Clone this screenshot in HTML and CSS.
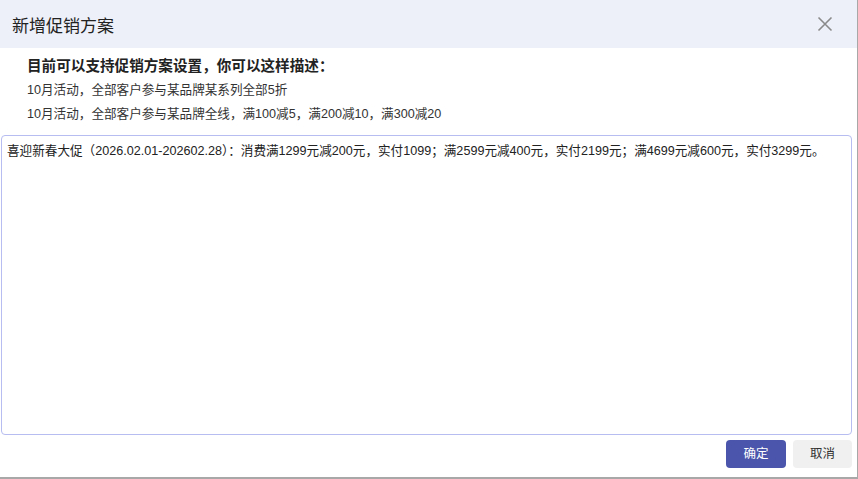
FILE: index.html
```html
<!DOCTYPE html>
<html lang="zh-CN">
<head>
    <meta charset="UTF-8">
    <title>新增促销方案</title>
    <link rel="stylesheet" href="styles.css">
</head>
<body>
    <div class="dialog">
        <div class="header">
            <div class="title">新增促销方案</div>
            <div class="close">
                <svg width="16" height="16" viewBox="0 0 16 16">
                    <path d="M1.5 1.5 L14.5 14.5 M14.5 1.5 L1.5 14.5" stroke="#8a8a8a" stroke-width="1.6" fill="none"/>
                </svg>
            </div>
        </div>
        <div class="body">
            <div class="tips">
                <div class="tip-title">目前可以支持促销方案设置，你可以这样描述：</div>
                <div class="tip-line">10月活动，全部客户参与某品牌某系列全部5折</div>
                <div class="tip-line">10月活动，全部客户参与某品牌全线，满100减5，满200减10，满300减20</div>
            </div>
            <textarea class="content">喜迎新春大促（2026.02.01-202602.28）：消费满1299元减200元，实付1099；满2599元减400元，实付2199元；满4699元减600元，实付3299元。</textarea>
            <div class="footer">
                <div class="btn primary">确定</div>
                <div class="btn">取消</div>
            </div>
        </div>
    </div>
</body>
</html>
```

FILE: styles.css
```css
html, body {
    margin: 0;
    padding: 0;
}
body {
    font-family: "Liberation Sans", "Noto Sans CJK SC", sans-serif;
    color: #333333;
    background: #ffffff;
}
.dialog {
    width: 857px;
    height: 477px;
    border-right: 1px solid #a8a8a8;
    border-bottom: 2px solid #a8a8a8;
    display: flex;
    flex-direction: column;
    background: #ffffff;
}
.header {
    height: 48px;
    background: #edf0f8;
    display: flex;
    align-items: center;
    justify-content: space-between;
    padding: 0 24px 0 12px;
    flex-shrink: 0;
}
.header .title {
    font-size: 17px;
    color: #222222;
}
.header .close {
    width: 16px;
    height: 16px;
    display: flex;
}
.body {
    flex: 1;
    display: flex;
    flex-direction: column;
    padding: 0 5px 0 1px;
}
.tips {
    padding: 6px 0 0 26px;
    height: 87px;
    box-sizing: border-box;
}
.tip-title {
    font-size: 14.6px;
    font-weight: bold;
    color: #222222;
    line-height: 24px;
}
.tip-line {
    font-size: 12.6px;
    color: #333333;
    line-height: 24px;
}
.content {
    height: 300px;
    box-sizing: border-box;
    border: 1px solid #b7bdf0;
    border-radius: 4px;
    padding: 6px 5px;
    font-family: "Liberation Sans", "Noto Sans CJK SC", sans-serif;
    font-size: 12.6px;
    line-height: 18px;
    color: #222222;
    resize: none;
    outline: none;
    margin: 0;
    width: 100%;
}
.footer {
    display: flex;
    justify-content: flex-end;
    gap: 7px;
    padding-top: 5px;
}
.btn {
    width: 59px;
    height: 28px;
    line-height: 28px;
    text-align: center;
    border-radius: 4px;
    font-size: 12.5px;
    background: #f0f0f0;
    color: #333333;
    user-select: none;
    cursor: default;
}
.btn.primary {
    width: 60px;
    background: #4a55ab;
    color: #ffffff;
}
```
